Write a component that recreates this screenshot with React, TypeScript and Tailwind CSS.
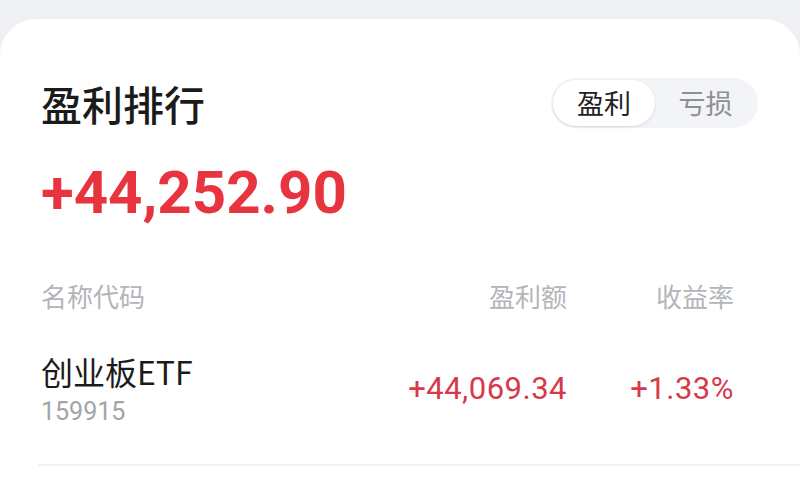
import React from "react";

const cjk = { fontFamily: '"Noto Sans CJK SC", "Noto Sans", sans-serif' };
const num = { fontFamily: 'Roboto, "Noto Sans", sans-serif' };

export default function App() {
  return (
    <div className="w-[800px] h-[500px] overflow-hidden bg-[#eff0f4]" style={cjk}>
      <div className="mt-[19px] h-[600px] rounded-t-[36px] bg-white">
        <div className="flex items-center justify-between pl-[41px] pr-[42px] pt-[59px]">
          <div className="text-[41px] leading-[50px] font-medium text-[#1b1b1b]">盈利排行</div>
          <div className="flex h-[50px] w-[207px] items-center rounded-full bg-[#f3f4f7] p-[2px]">
            <div className="flex h-[46px] w-[102px] items-center justify-center rounded-full bg-white text-[27px] text-[#222] shadow-[0_1px_3px_rgba(0,0,0,0.12)]">
              盈利
            </div>
            <div className="flex h-[46px] flex-1 items-center justify-center text-[27px] text-[#8d8f94]">
              亏损
            </div>
          </div>
        </div>
        <div className="pl-[41px] pt-[33px]">
          <div className="text-[60px] leading-[64px] font-bold text-[#e8343f]" style={num}>
            +44,252.90
          </div>
        </div>
        <div className="mt-[55px] flex items-center pl-[41px] pr-[66px] text-[26px] leading-[32px] text-[#b4b5b8]">
          <div className="flex-1">名称代码</div>
          <div className="w-[160px] text-right">盈利额</div>
          <div className="w-[167px] text-right">收益率</div>
        </div>
        <div className="mt-[40px] flex items-center pl-[41px] pr-[66px]">
          <div className="flex-1">
            <div className="text-[32px] leading-[38px] text-[#1b1b1b]">创业板ETF</div>
            <div className="mt-[8px] text-[25px] leading-[28px] text-[#a3a4a7]" style={num}>
              159915
            </div>
          </div>
          <div className="w-[220px] text-right text-[31px] tracking-[0.5px] text-[#d63a4a]" style={num}>
            +44,069.34
          </div>
          <div className="w-[167px] text-right text-[31px] tracking-[0.5px] text-[#d63a4a]" style={num}>
            +1.33%
          </div>
        </div>
        <div className="ml-[38px] mt-[38px] h-[2px] bg-[#f2f2f4]"></div>
        <div className="pl-[41px] pt-[29px] text-[32px] leading-[38px] text-[#1b1b1b]">沪深300ETF</div>
      </div>
    </div>
  );
}
